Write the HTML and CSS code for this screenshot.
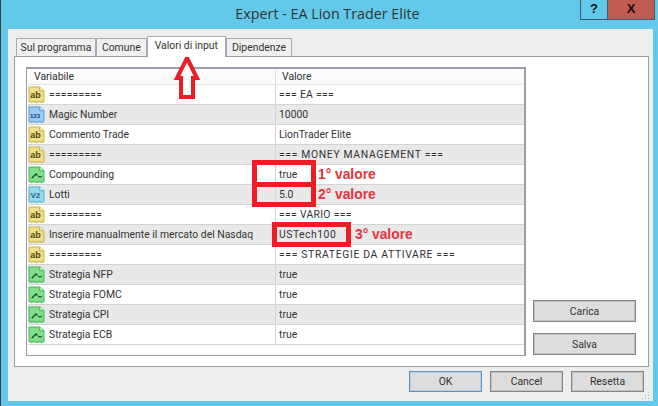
FILE: index.html
```html
<!DOCTYPE html>
<html lang="it">
<head>
<meta charset="utf-8">
<title>Expert - EA Lion Trader Elite</title>
<link rel="stylesheet" href="styles.css">
</head>
<body>
<svg class="defs" width="0" height="0" aria-hidden="true">
  <defs>
    <symbol id="doc-ab" viewBox="0 0 16 16">
      <path d="M1 1H11L15 4.5V14.5L13 15.5L11 14.5L8 15.5L5 14.5L3 15.5L1 14.5Z" fill="#efe08a" stroke="#c9b355"/>
      <path d="M11 1V4.5H15" fill="#fbf6cf" stroke="#c9b355"/>
      <text x="2.2" y="11.5" class="ico-t ico-ab">ab</text>
    </symbol>
    <symbol id="doc-123" viewBox="0 0 16 16">
      <path d="M1 1H11L15 4.5V14.5L13 15.5L11 14.5L8 15.5L5 14.5L3 15.5L1 14.5Z" fill="#9ccbf3" stroke="#5d9ad4"/>
      <path d="M11 1V4.5H15" fill="#dcecfa" stroke="#5d9ad4"/>
      <text x="1.8" y="11.5" class="ico-t ico-num">123</text>
    </symbol>
    <symbol id="doc-bool" viewBox="0 0 16 16">
      <path d="M1 1H11L15 4.5V14.5L13 15.5L11 14.5L8 15.5L5 14.5L3 15.5L1 14.5Z" fill="#82de8a" stroke="#45b855"/>
      <path d="M11 1V4.5H15" fill="#d4f6d6" stroke="#45b855"/>
      <path d="M3.5 11.5L7.5 7.5L9 9M9.5 10H13" fill="none" stroke="#145c28" stroke-width="1.4"/>
    </symbol>
    <symbol id="doc-dbl" viewBox="0 0 16 16">
      <path d="M1 1H11L15 4.5V14.5L13 15.5L11 14.5L8 15.5L5 14.5L3 15.5L1 14.5Z" fill="#96dcec" stroke="#57b3cc"/>
      <path d="M11 1V4.5H15" fill="#def5f9" stroke="#57b3cc"/>
      <text x="2.4" y="11.5" class="ico-t ico-dbl">V2</text>
    </symbol>
  </defs>
</svg>

<div class="window">
  <header class="titlebar">
    <h1 class="title">Expert - EA Lion Trader Elite</h1>
    <div class="controls">
      <span class="ctl ctl-help">?</span>
      <span class="ctl ctl-close">X</span>
    </div>
  </header>

  <main class="dialog">
    <nav class="tabs">
      <span class="tab tab-first">Sul programma</span>
      <span class="tab">Comune</span>
      <span class="tab tab-active">Valori di input</span>
      <span class="tab">Dipendenze</span>
    </nav>

    <section class="panel">
      <div class="grid">
        <div class="grid-head">
          <div class="hcell hcell-name">Variabile</div>
          <div class="hcell">Valore</div>
        </div>
        <div class="row"><div class="name"><svg class="ico"><use href="#doc-ab"/></svg><span class="sep">=========</span></div><div class="val val-short">=== EA ===</div></div>
        <div class="row"><div class="name"><svg class="ico"><use href="#doc-123"/></svg>Magic Number</div><div class="val">10000</div></div>
        <div class="row"><div class="name"><svg class="ico"><use href="#doc-ab"/></svg>Commento Trade</div><div class="val">LionTrader Elite</div></div>
        <div class="row"><div class="name"><svg class="ico"><use href="#doc-ab"/></svg><span class="sep">=========</span></div><div class="val val-caps">=== MONEY MANAGEMENT ===</div></div>
        <div class="row"><div class="name"><svg class="ico"><use href="#doc-bool"/></svg>Compounding</div><div class="val">true</div></div>
        <div class="row"><div class="name"><svg class="ico"><use href="#doc-dbl"/></svg>Lotti</div><div class="val">5.0</div></div>
        <div class="row"><div class="name"><svg class="ico"><use href="#doc-ab"/></svg><span class="sep">=========</span></div><div class="val val-short">=== VARIO ===</div></div>
        <div class="row"><div class="name"><svg class="ico"><use href="#doc-ab"/></svg>Inserire manualmente il mercato del Nasdaq</div><div class="val val-tech">USTech100</div></div>
        <div class="row"><div class="name"><svg class="ico"><use href="#doc-ab"/></svg><span class="sep">=========</span></div><div class="val val-caps">=== STRATEGIE DA ATTIVARE ===</div></div>
        <div class="row"><div class="name"><svg class="ico"><use href="#doc-bool"/></svg>Strategia NFP</div><div class="val">true</div></div>
        <div class="row"><div class="name"><svg class="ico"><use href="#doc-bool"/></svg>Strategia FOMC</div><div class="val">true</div></div>
        <div class="row"><div class="name"><svg class="ico"><use href="#doc-bool"/></svg>Strategia CPI</div><div class="val">true</div></div>
        <div class="row"><div class="name"><svg class="ico"><use href="#doc-bool"/></svg>Strategia ECB</div><div class="val">true</div></div>
      </div>
      <div class="side">
        <button class="btn btn-side" type="button">Carica</button>
        <button class="btn btn-side" type="button">Salva</button>
      </div>
    </section>

    <footer class="actions">
      <button class="btn btn-foot btn-default" type="button">OK</button>
      <button class="btn btn-foot" type="button">Cancel</button>
      <button class="btn btn-foot" type="button">Resetta</button>
    </footer>
  </main>

  <div class="mark mark-1"></div>
  <div class="mark mark-2"></div>
  <div class="mark mark-3"></div>
  <span class="note note-1">1° valore</span>
  <span class="note note-2">2° valore</span>
  <span class="note note-3">3° valore</span>
  <svg class="arrow" width="30" height="48" viewBox="0 0 30 48" aria-hidden="true">
    <path d="M15 5L25 25H21V44H9V25H5Z" fill="#fff" stroke="#ee1c25" stroke-width="4"/>
  </svg>
  <svg class="grip" width="8" height="8" viewBox="0 0 8 8" aria-hidden="true">
    <path d="M6 0h1v1H6zM3 3h1v1H3zM6 3h1v1H6zM0 6h1v1H0zM3 6h1v1H3zM6 6h1v1H6z" fill="#b4b4b4"/>
  </svg>
</div>
</body>
</html>
```
FILE: styles.css
```css
* { box-sizing: border-box; }
html, body { margin: 0; padding: 0; }
body { width: 658px; height: 406px; overflow: hidden; font-family: Roboto, "Liberation Sans", Arial, sans-serif; font-size: 10.4px; color: #333; }
.defs { position: absolute; }

.window { position: relative; width: 658px; height: 406px; background: #62c9ea; border-left: 1px solid #3c4148; padding: 0 5px 5px 7px; display: flex; flex-direction: column; }

.titlebar { height: 29px; flex: none; position: relative; display: flex; justify-content: center; }
.title { margin: 5px 0 0; padding-right: 6px; font-family: "Open Sans", sans-serif; font-size: 14.3px; font-weight: 400; line-height: 18px; color: #333; }
.controls { position: absolute; top: 0; right: -2px; display: flex; height: 20px; border: 1px solid #3f5a68; border-top: 0; }
.ctl { display: block; font-family: "Liberation Sans", sans-serif; font-weight: 700; font-size: 13px; line-height: 17px; text-align: center; color: #111; }
.ctl-help { width: 27px; border-right: 1px solid #3f5a68; }
.ctl-close { width: 46px; background: #c15b52; }

.dialog { flex: 1; background: #eeeeee; padding: 7px 4px 0 6px; display: flex; flex-direction: column; }

.tabs { display: flex; height: 20px; padding-left: 2px; align-items: flex-end; position: relative; z-index: 1; flex: none; }
.tab { height: 18px; background: #f0f0f0; border: 1px solid #a8abb2; border-bottom: 0; padding: 2px 5px 0; line-height: 14px; color: #333; white-space: nowrap; }
.tab-first { padding: 2px 3.5px 0; }
.tab-active { height: 21px; margin: 0 0 -1px 0; background: #fff; padding: 2px 7px 0; }

.panel { height: 311px; background: #fff; border: 1px solid #9a9ca6; padding: 10px 12px 10px 11px; display: flex; gap: 7px; flex: none; }

.grid { width: 500px; flex: none; border: 1px solid #9a9ca6; border-top-width: 2px; border-right-width: 2px; padding-left: 1px; background: #fff; }
.grid-head { display: flex; height: 16px; background: #fbfbfb; border-bottom: 1px solid #e4e4e4; margin-right: 1px; }
.hcell { padding-left: 6px; line-height: 16px; color: #333; }
.hcell-name { width: 248px; border-right: 1px solid #e0e0e0; }
.row { display: flex; height: 20px; border-bottom: 1px solid #d4d4d4; line-height: 19px; color: #333; }
.row:nth-child(odd) { background: #e9e9e9; }
.row:nth-child(even) { background: #fff; }
.name { width: 248px; flex: none; display: flex; align-items: center; border-right: 1px solid #d4d4d4; white-space: nowrap; }
.val { padding-left: 3px; white-space: nowrap; }
.val-caps { letter-spacing: 0.65px; }
.val-short { letter-spacing: 0.3px; }
.val-tech { letter-spacing: 0.5px; }
.sep { letter-spacing: 0.2px; }
.ico { width: 17px; height: 17px; flex: none; margin-right: 4px; display: block; }
.ico-t { font-family: "Liberation Sans", sans-serif; font-weight: 700; font-size: 8.5px; }
.ico-num { font-size: 5.8px; fill: #123f7a; }
.ico-ab { fill: #55460e; }
.ico-dbl { font-size: 7.5px; fill: #1c6a84; }

.side { flex: 1; display: flex; flex-direction: column; justify-content: flex-end; gap: 11px; padding-bottom: 1px; }
.btn { display: block; font: inherit; color: #333; background: #dddddd; border: 1px solid #858585; box-shadow: inset 0 0 0 1px #c4c4c4; padding: 0; border-radius: 0; }
.btn-side { width: 103px; height: 22px; }

.actions { flex: 1; display: flex; justify-content: flex-end; align-items: flex-start; gap: 8px; padding: 4px 5px 0 0; }
.btn-foot { width: 73px; height: 21px; }
.btn-default { border-color: #5a93c6; box-shadow: inset 0 0 0 1px #b9cfe2; }

.mark { position: absolute; border: 5px solid #ee1c25; }
.mark-1 { left: 251px; top: 160px; width: 64px; height: 27px; }
.mark-2 { left: 251px; top: 182px; width: 64px; height: 25px; }
.mark-3 { left: 271px; top: 222px; width: 79px; height: 25px; }
.note { position: absolute; color: #e8333f; font-family: "Liberation Sans", sans-serif; font-weight: 700; font-size: 13.8px; line-height: 16px; white-space: nowrap; }
.note-1 { left: 317px; top: 167px; }
.note-2 { left: 317px; top: 187px; }
.note-3 { left: 354px; top: 227px; }
.arrow { position: absolute; left: 171px; top: 53px; }
.grip { position: absolute; right: 8px; bottom: 6px; }
```
